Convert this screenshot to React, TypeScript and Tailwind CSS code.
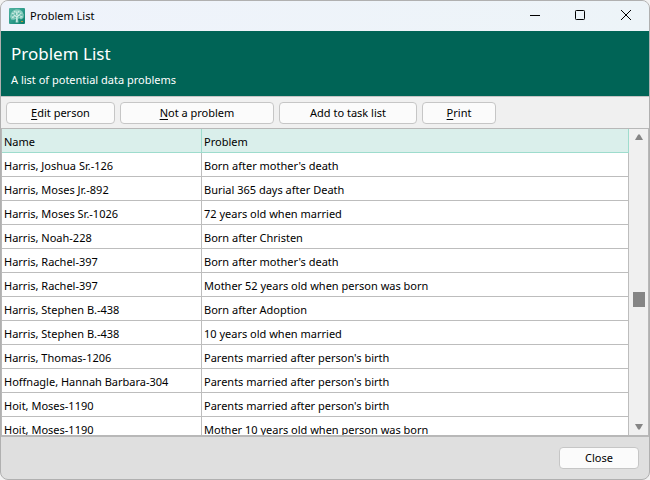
import { useState } from "react";
import type { ReactNode } from "react";

type Row = { name: string; problem: string };

const rows: Row[] = [
    { name: "Harris, Joshua Sr.-126", problem: "Born after mother's death" },
    { name: "Harris, Moses Jr.-892", problem: "Burial 365 days after Death" },
    { name: "Harris, Moses Sr.-1026", problem: "72 years old when married" },
    { name: "Harris, Noah-228", problem: "Born after Christen" },
    { name: "Harris, Rachel-397", problem: "Born after mother's death" },
    { name: "Harris, Rachel-397", problem: "Mother 52 years old when person was born" },
    { name: "Harris, Stephen B.-438", problem: "Born after Adoption" },
    { name: "Harris, Stephen B.-438", problem: "10 years old when married" },
    { name: "Harris, Thomas-1206", problem: "Parents married after person's birth" },
    { name: "Hoffnagle, Hannah Barbara-304", problem: "Parents married after person's birth" },
    { name: "Hoit, Moses-1190", problem: "Parents married after person's birth" },
    { name: "Hoit, Moses-1190", problem: "Mother 10 years old when person was born" },
];

function PushButton({ className, children }: { className: string; children: ReactNode }) {
    return (
        <button
            type="button"
            className={`h-[22px] rounded border border-[#c6c6c6] bg-[#fbfbfb] text-center leading-5 text-black hover:bg-white ${className}`}
        >
            {children}
        </button>
    );
}

function Mnemonic({ children }: { children: string }) {
    return <span className="underline underline-offset-2">{children}</span>;
}

function TreeIcon() {
    return (
        <svg width="16" height="16" viewBox="0 0 16 16" aria-hidden="true">
            <defs>
                <linearGradient id="leaf" x1="0" y1="0" x2="1" y2="1">
                    <stop offset="0" stopColor="#52b3a1" />
                    <stop offset="0.5" stopColor="#2f9c8b" />
                    <stop offset="1" stopColor="#087c68" />
                </linearGradient>
            </defs>
            <rect width="16" height="16" rx="1" fill="url(#leaf)" />
            <path d="M1 8.5 2 5l2.2-2.6L7 1.2l3.5.2L13.4 3.6l1.4 3.2-.4 3.2-2.4 1.6-1.8-1.3-1.2.6.6 3.7H6.4l.6-3.6-2.2.8L2.2 11.4z" fill="#86cbbd" />
            <path d="M7.8 14.2V9L5 7.2M7.8 9l3-2.6M7.8 7V3.4M3 9.4l2-.6M3.2 5.2l1.5.6M5.4 3l.9 1.3M10 3l-.7 1.6M12.4 5l-1.2.5M11 9l2.3-.4" fill="none" stroke="#d2eee6" strokeWidth="1.2" />
            <path d="M3.2 7.2h1M6 6h1M9.3 5.8h1M12.4 7h1M5.7 9.3h1M9.7 8.6h1" stroke="#3a9e8d" strokeWidth="0.9" />
            <rect x="12" y="13" width="2" height="1" fill="#b59a3c" />
        </svg>
    );
}

function TitleBar() {
    return (
        <div className="flex h-[30px] shrink-0 items-center bg-linear-to-r from-[#eff3fb] to-[#edf4f8] pl-2">
            <TreeIcon />
            <span className="ml-[5px] flex-1">Problem List</span>
            <button type="button" aria-label="Minimize" className="flex h-full w-11 items-center justify-center">
                <svg width="12" height="12" viewBox="0 0 12 12" fill="none" stroke="#000">
                    <path d="M1 5.5h10" />
                </svg>
            </button>
            <button type="button" aria-label="Maximize" className="flex h-full w-[46px] items-center justify-center">
                <svg width="12" height="12" viewBox="0 0 12 12" fill="none" stroke="#000">
                    <rect x="1.5" y="0.5" width="9" height="9" rx="0.8" />
                </svg>
            </button>
            <button type="button" aria-label="Close window" className="flex h-full w-[46px] items-center justify-center">
                <svg width="12" height="12" viewBox="0 0 12 12" fill="none" stroke="#000">
                    <path d="m1 0 10 10M11 0 1 10" />
                </svg>
            </button>
        </div>
    );
}

function ScrollBar() {
    return (
        <div className="flex w-[19px] shrink-0 flex-col items-center bg-[#f0f0f0]">
            <button type="button" aria-label="Scroll up" className="flex h-4 w-full items-center justify-center">
                <svg width="10" height="8" viewBox="0 0 10 8" fill="#858585">
                    <path d="M1 7 4.2 1.4h1.6L9 7z" />
                </svg>
            </button>
            {/* thumb sits a little past halfway down the track */}
            <div className="grow-[148]" />
            <div className="h-[15px] w-3 bg-[#858585]" />
            <div className="grow-[113]" />
            <button type="button" aria-label="Scroll down" className="flex h-4 w-full items-center justify-center">
                <svg width="10" height="8" viewBox="0 0 10 8" fill="#858585">
                    <path d="M1 1h8L5.8 6.6H4.2z" />
                </svg>
            </button>
        </div>
    );
}

export default function App() {
    const [selected, setSelected] = useState<number | null>(null);

    return (
        <div className="h-screen bg-[#f2f2f2]">
            <div className="flex h-full flex-col overflow-hidden rounded-lg border border-[#b0b0b0] bg-[#dfdfdf] font-['Noto_Sans',sans-serif] text-[11px] leading-4 text-black">
                <TitleBar />

                <header className="h-[65px] shrink-0 bg-[#006456] px-[10px] pt-[11px] text-white">
                    <h1 className="text-[17px] leading-6">Problem List</h1>
                    <p className="mt-1 leading-5">A list of potential data problems</p>
                </header>

                <div className="flex h-8 shrink-0 items-center gap-[5px] border-t border-[#c4c4c4] bg-[#f0f0f0] px-[5px]">
                    <PushButton className="w-[109px]"><Mnemonic>E</Mnemonic>dit person</PushButton>
                    <PushButton className="w-[154px]"><Mnemonic>N</Mnemonic>ot a problem</PushButton>
                    <PushButton className="w-[138px]">Add to task list</PushButton>
                    <PushButton className="w-[74px]"><Mnemonic>P</Mnemonic>rint</PushButton>
                </div>

                <main className="flex min-h-0 flex-1 border border-b-2 border-[#b8b8b8] bg-white">
                    <div className="min-w-0 flex-1 overflow-hidden">
                        <table className="w-full table-fixed border-separate border-spacing-0 text-left">
                            <thead>
                                <tr className="h-6 bg-[#daefeb]">
                                    <th className="w-[200px] border-r border-b border-[#9edccd] px-[2px] pt-[2px] font-normal">Name</th>
                                    <th className="border-r border-b border-[#9edccd] px-[2px] pt-[2px] font-normal">Problem</th>
                                </tr>
                            </thead>
                            <tbody>
                                {rows.map((row, i) => (
                                    <tr key={i} onClick={() => setSelected(i)} className={`h-6 ${selected === i ? "bg-[#daefeb]" : ""}`}>
                                        <td className="truncate border-r border-b border-[#bdbdbd] px-[2px] pt-[2px]">{row.name}</td>
                                        <td className="truncate border-r border-b border-[#bdbdbd] px-[2px] pt-[2px]">{row.problem}</td>
                                    </tr>
                                ))}
                            </tbody>
                        </table>
                    </div>
                    <ScrollBar />
                </main>

                <footer className="flex h-[42px] shrink-0 items-center justify-end px-[10px]">
                    <PushButton className="w-20">Close</PushButton>
                </footer>
            </div>
        </div>
    );
}
